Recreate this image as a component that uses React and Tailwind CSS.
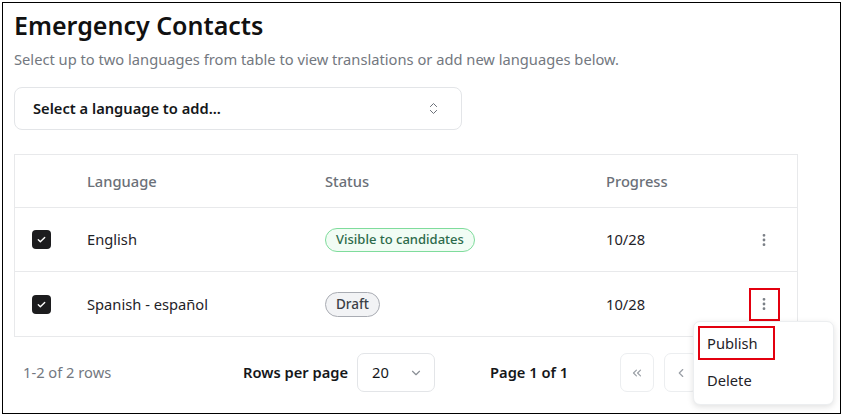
import React from 'react';
import { ChevronsUpDown, ChevronDown, ChevronsLeft, ChevronLeft, EllipsisVertical } from 'lucide-react';

const rows = [
  { id: 'en', name: 'English', status: 'visible', progress: '10/28' },
  { id: 'es', name: 'Spanish - español', status: 'draft', progress: '10/28', highlighted: true },
];

function Checkbox() {
  return (
    <span className="w-[19px] h-[19px] rounded-[4px] bg-[#1c1c1e] flex items-center justify-center">
      <svg width="11" height="11" viewBox="0 0 24 24" fill="none" stroke="white" strokeWidth={3} strokeLinecap="round" strokeLinejoin="round">
        <path d="M5 12.5l4.5 4.5L19 7.5" />
      </svg>
    </span>
  );
}

function StatusBadge({ status }) {
  if (status === 'visible') {
    return (
      <span className="inline-flex items-center h-[24px] px-[10px] rounded-full border-[1.5px] border-[#7fdc9c] bg-[#f1fcf4] text-[#2d6a4a] text-[13px] font-medium">
        Visible to candidates
      </span>
    );
  }
  return (
    <span className="inline-flex items-center h-[25px] px-[10px] rounded-full border-[1.5px] border-[#a9acb3] bg-[#f2f3f5] text-[#3b3f46] text-[13.5px] font-medium">
      Draft
    </span>
  );
}

export default function App() {
  return (
    <div
      className="w-[847px] h-[417px] bg-white p-[2px] text-[#1f2328]"
      style={{ fontFamily: '"Noto Sans", "Open Sans", sans-serif' }}
    >
      <div className="relative w-[839px] h-[412px] border-[1.5px] border-black pl-[11px] pt-[5px]">
        <h1 className="text-[25px] leading-[34px] font-semibold text-[#111]">Emergency Contacts</h1>
        <p className="mt-[7px] text-[14.7px] leading-[20px] text-[#737880]">
          Select up to two languages from table to view translations or add new languages below.
        </p>

        <button className="mt-[18px] w-[448px] h-[43px] rounded-[8px] border border-[#e3e5e8] flex items-center justify-between pl-[18px] pr-[20px]">
          <span className="text-[14.7px] font-semibold text-[#15171a]">Select a language to add...</span>
          <ChevronsUpDown size={15} className="text-[#6b7078]" strokeWidth={1.6} />
        </button>

        <div className="mt-[24px] w-[784px] border border-[#e8e9eb]">
          <div className="grid grid-cols-[72px_238px_281px_125px_1fr] h-[53px] items-center border-b border-[#e8e9eb] text-[14.7px] font-medium text-[#6b7078]">
            <div />
            <div>Language</div>
            <div>Status</div>
            <div>Progress</div>
            <div />
          </div>
          {rows.map((row, i) => (
            <div
              key={row.id}
              className={`grid grid-cols-[72px_238px_281px_125px_1fr] h-[64px] items-center text-[14.7px] text-[#1f2328] ${
                i < rows.length - 1 ? 'border-b border-[#e8e9eb]' : ''
              }`}
            >
              <div className="pl-[17px]">
                <Checkbox />
              </div>
              <div>{row.name}</div>
              <div>
                <StatusBadge status={row.status} />
              </div>
              <div>{row.progress}</div>
              <div className="flex justify-center">
                <span
                  className={`w-[31px] h-[33px] flex items-center justify-center ${
                    row.highlighted ? 'border-2 border-[#e3000f]' : 'border-2 border-transparent'
                  }`}
                >
                  <EllipsisVertical size={16} className="text-[#7a7f86]" strokeWidth={2.2} />
                </span>
              </div>
            </div>
          ))}
        </div>

        <div className="mt-[16px] flex items-center h-[39px] text-[14.7px]">
          <span className="ml-[9px] w-[220px] text-[#737880]">1-2 of 2 rows</span>
          <span className="font-semibold text-[#15171a]">Rows per page</span>
          <span className="ml-[9px] w-[78px] h-[39px] rounded-[7px] border border-[#e3e5e8] flex items-center justify-between pl-[14px] pr-[11px]">
            <span className="text-[#15171a]">20</span>
            <ChevronDown size={14} className="text-[#8a8f96]" />
          </span>
          <span className="ml-[55px] font-semibold text-[#15171a]">Page 1 of 1</span>
          <span className="ml-[52px] w-[34px] h-[39px] rounded-[7px] border border-[#eceef0] flex items-center justify-center">
            <ChevronsLeft size={14} className="text-[#9a9fa6]" />
          </span>
          <span className="ml-[10px] w-[34px] h-[39px] rounded-[7px] border border-[#eceef0] flex items-center justify-center">
            <ChevronLeft size={14} className="text-[#9a9fa6]" />
          </span>
        </div>

        <div className="absolute left-[690px] top-[318px] w-[141px] h-[84px] rounded-[7px] border border-[#eceef0] bg-white shadow-[0_2px_6px_rgba(0,0,0,0.12)] pt-[4px] pl-[4px] text-[14.7px] text-[#1f2328]">
          <div className="w-[77px] h-[34px] border-2 border-[#e3000f] flex items-center pl-[7px]">Publish</div>
          <div className="h-[36px] flex items-center pl-[9px] mt-[2px]">Delete</div>
        </div>
      </div>
    </div>
  );
}
